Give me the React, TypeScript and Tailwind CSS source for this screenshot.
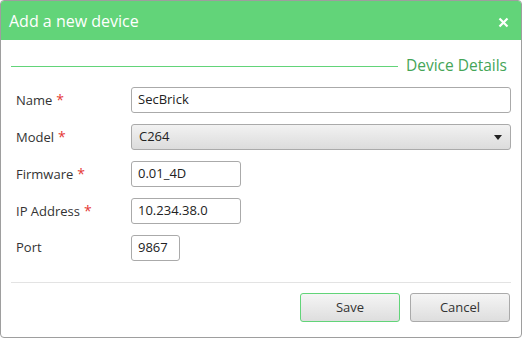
import React from "react";

const font = { fontFamily: '"Open Sans", "Noto Sans", sans-serif' };

function Row({
  label,
  required,
  children,
}: {
  label: string;
  required?: boolean;
  children: React.ReactNode;
}) {
  return (
    <div className="flex h-[26px] items-center">
      <div className="w-[120px] pl-[5px] text-[13px] text-[#333]">
        {label}
        {required && <span className="ml-[4px] text-[14px] text-[#e53935]">*</span>}
      </div>
      {children}
    </div>
  );
}

function Field({ value, width }: { value: string; width: string }) {
  return (
    <div
      className={`flex h-[26px] ${width} items-center rounded-[3px] border border-[#aaa] bg-white px-[6px] text-[13px] text-[#222]`}
    >
      {value}
    </div>
  );
}

export default function App() {
  return (
    <div
      style={font}
      className="flex h-[338px] w-[522px] flex-col overflow-hidden rounded-[4px] border border-[#9e9e9e] bg-white"
    >
      <div className="flex h-[39px] shrink-0 items-center justify-between bg-[#62d479] pl-[8px] pr-[12px]">
        <span className="text-[16px] text-white">Add a new device</span>
        <svg width="11" height="11" viewBox="0 0 11 11" className="mt-[3px]">
          <path d="M1.5 1.5 L9.5 9.5 M9.5 1.5 L1.5 9.5" stroke="#fff" strokeWidth="2.2" />
        </svg>
      </div>

      <div className="flex flex-1 flex-col px-[10px]">
        <div className="mt-[16px] flex h-[20px] items-center gap-[8px]">
          <div className="h-px flex-1 bg-[#62d479]" />
          <span className="pr-[4px] text-[15.5px] text-[#45a557]">Device Details</span>
        </div>

        <div className="mt-[11px] flex flex-col gap-[11px]">
          <Row label="Name" required>
            <Field value="SecBrick" width="w-[380px]" />
          </Row>
          <Row label="Model" required>
            <div className="flex h-[26px] w-[380px] items-center justify-between rounded-[3px] border border-[#aaa] bg-gradient-to-b from-[#f2f2f2] to-[#dcdcdc] pl-[7px] pr-[8px] text-[13px] text-[#222]">
              <span>C264</span>
              <svg width="8" height="5" viewBox="0 0 8 5">
                <path d="M0 0 H8 L4 5 Z" fill="#222" />
              </svg>
            </div>
          </Row>
          <Row label="Firmware" required>
            <Field value="0.01_4D" width="w-[110px]" />
          </Row>
          <Row label="IP Address" required>
            <Field value="10.234.38.0" width="w-[110px]" />
          </Row>
          <Row label="Port">
            <Field value="9867" width="w-[49px]" />
          </Row>
        </div>

        <div className="mt-[21px] h-px bg-[#e3e3e3]" />

        <div className="mt-[10px] flex justify-end gap-[10px] pr-[1px]">
          <button className="h-[29px] w-[100px] rounded-[3px] border border-[#62d479] bg-gradient-to-b from-[#f5f5f5] to-[#dedede] text-[13px] text-[#333]">
            Save
          </button>
          <button className="h-[29px] w-[100px] rounded-[3px] border border-[#aaa] bg-gradient-to-b from-[#f5f5f5] to-[#dedede] text-[13px] text-[#333]">
            Cancel
          </button>
        </div>
      </div>
    </div>
  );
}
